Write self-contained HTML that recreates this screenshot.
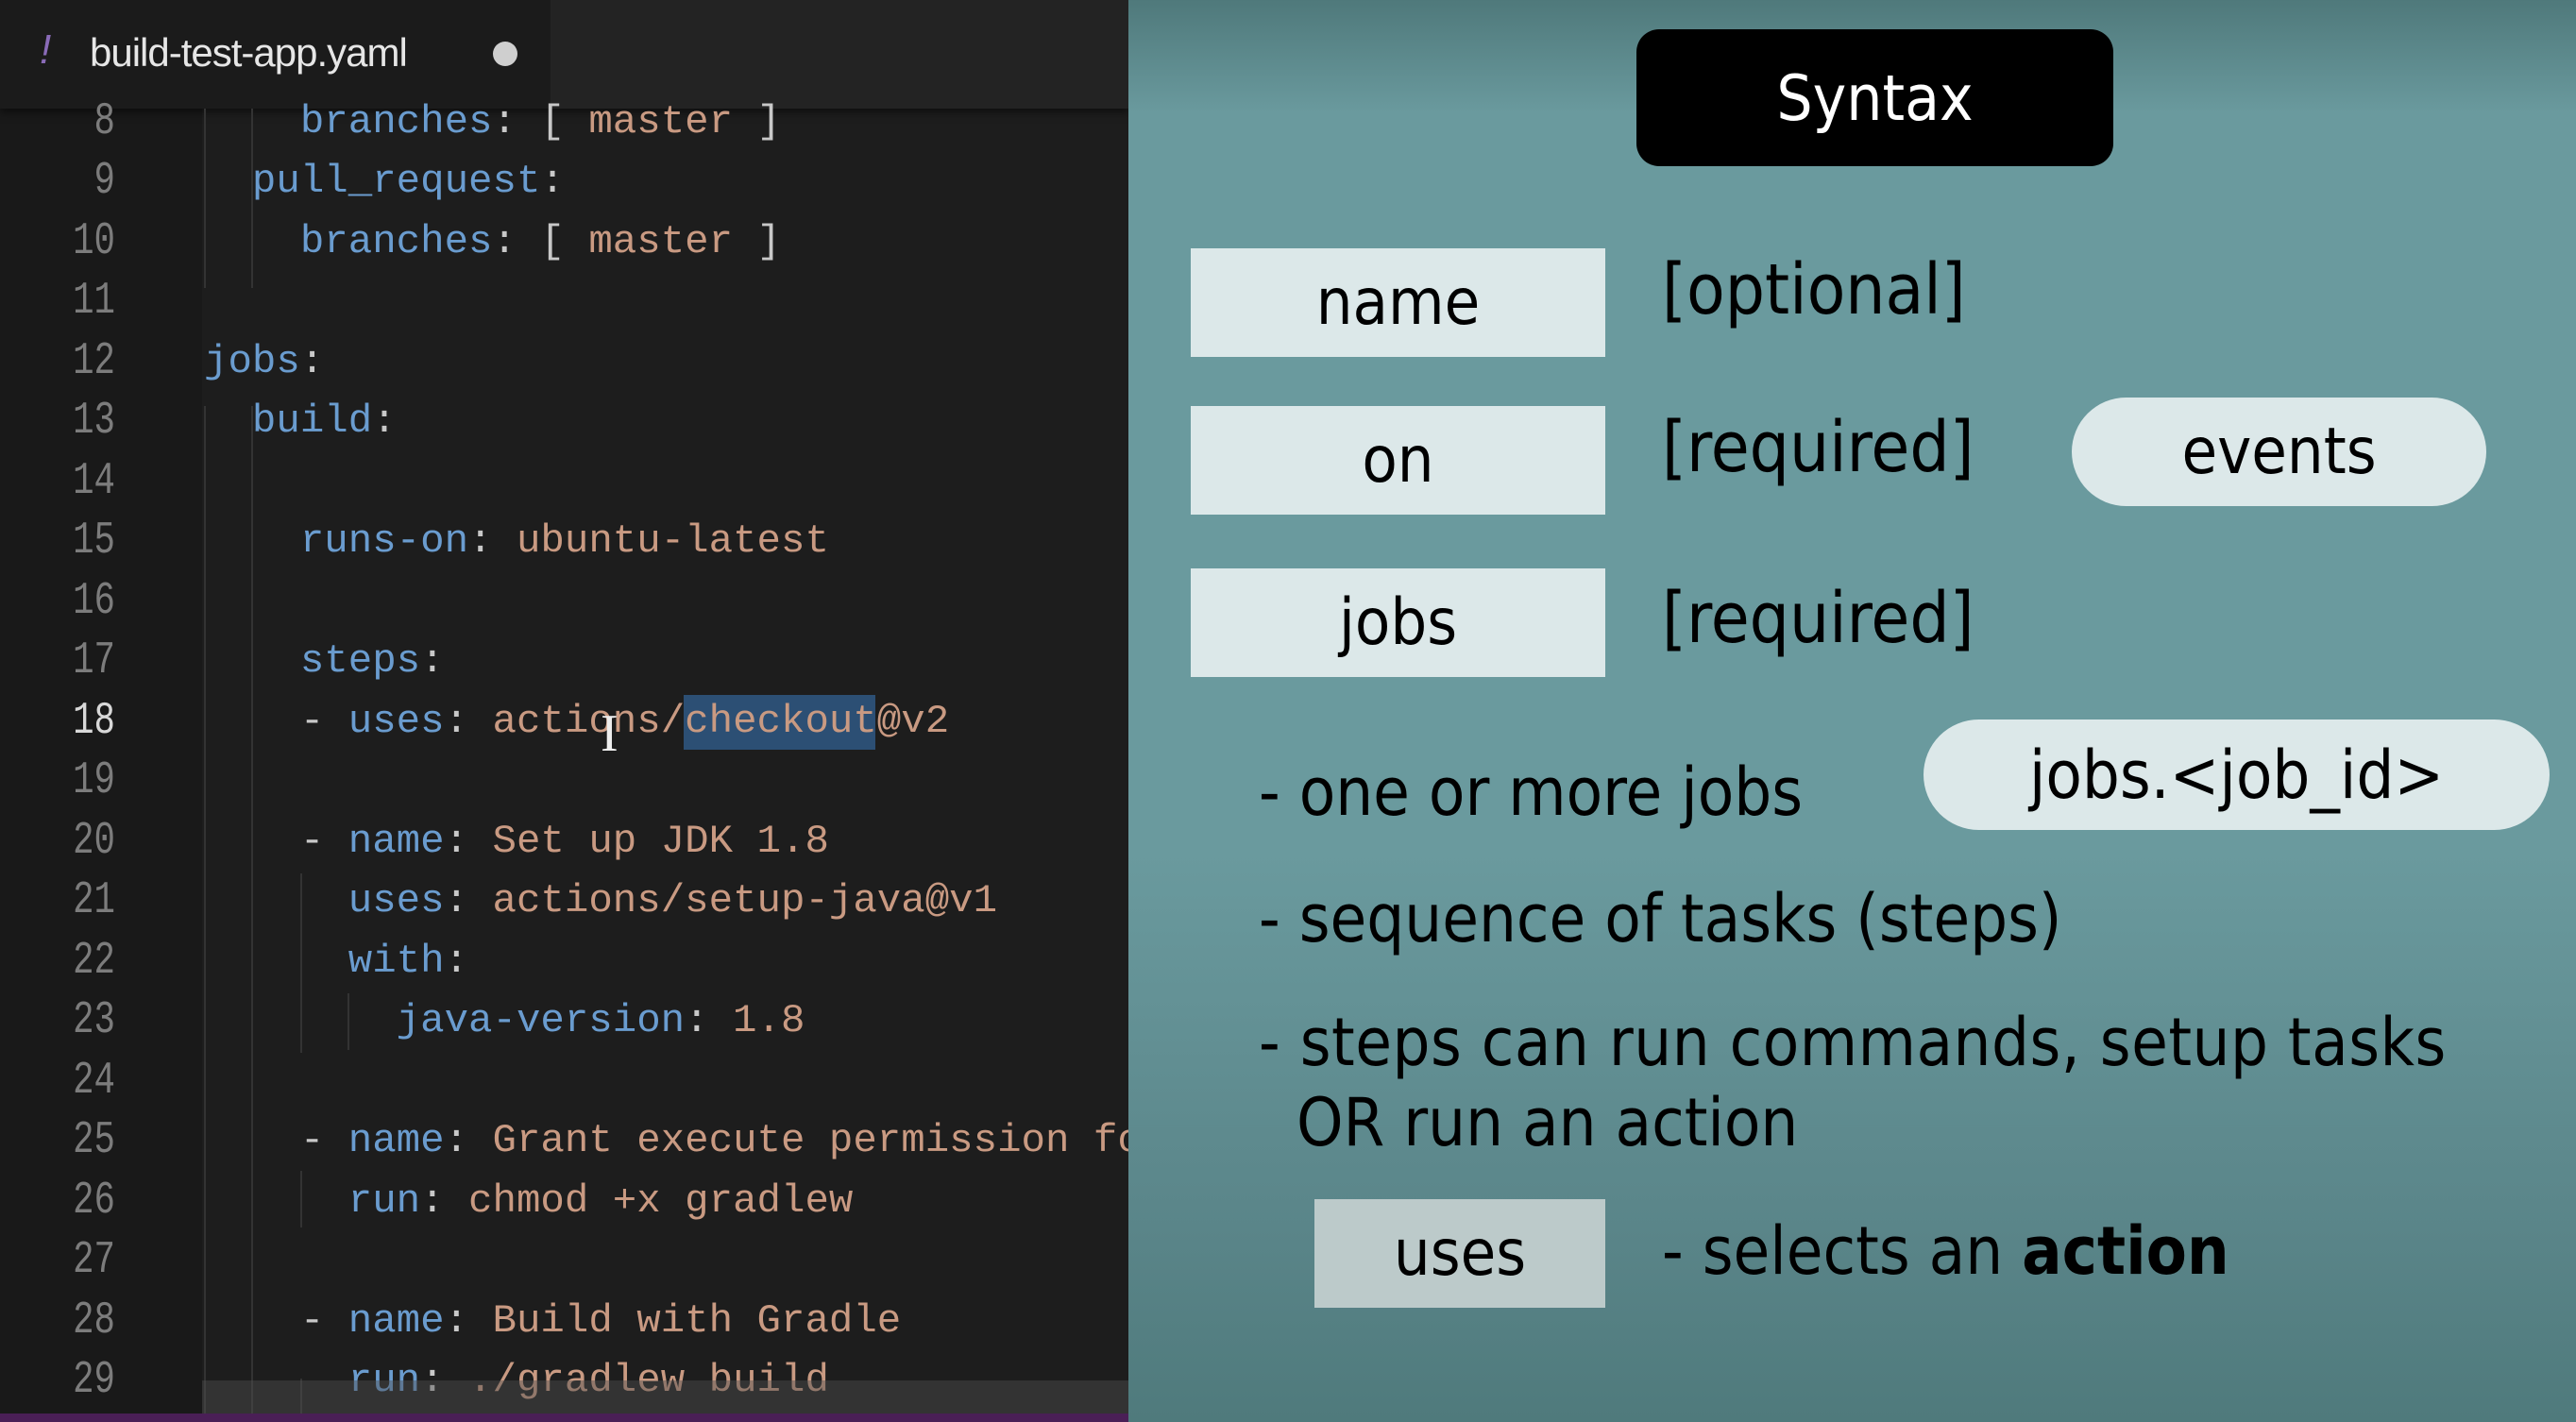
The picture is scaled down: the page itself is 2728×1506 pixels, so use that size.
<!DOCTYPE html>
<html><head><meta charset="utf-8"><style>
*{margin:0;padding:0;box-sizing:border-box}
body{width:2728px;height:1506px;overflow:hidden;position:relative;background:#1c1c1c;font-family:"Liberation Sans",sans-serif}
#ed{position:absolute;left:0;top:0;width:1195px;height:1506px;background:#1d1d1d;overflow:hidden}
#gut{position:absolute;left:0;top:115px;width:214px;height:1391px;background:#191919}
#tabbar{position:absolute;left:0;top:0;width:1195px;height:115px;background:#232323;box-shadow:0 4px 8px rgba(0,0,0,.5)}
#tab{position:absolute;left:0;top:0;width:583px;height:115px;background:#1b1b1b}
.ln{position:absolute;left:0;width:122px;text-align:right;font-family:"Liberation Mono",monospace;font-size:48px;color:#7c7c7c;line-height:63px;transform:scaleX(.78);transform-origin:right}
.code{position:absolute;left:216px;font-family:"Liberation Mono",monospace;font-size:42px;line-height:63px;white-space:pre;color:#c8c8c8;transform:scaleX(1.01);transform-origin:left}
.k{color:#6a9ccf}.v{color:#c99a82}.p{color:#cfcfcf}
.g{position:absolute;width:2px;background:#333}
#right{position:absolute;left:1195px;top:0;width:1533px;height:1506px;background:linear-gradient(#4f797b 0,#6a9a9e 120px,#6a9a9e 900px,#5a8589 1300px,#4f7a7c 1506px)}
.s{font-family:"DejaVu Sans Condensed","DejaVu Sans",sans-serif;font-stretch:condensed;color:#000;position:absolute;white-space:nowrap}
.box{position:absolute;background:#dce8e9;display:flex;align-items:center;justify-content:center;font-family:"DejaVu Sans Condensed","DejaVu Sans",sans-serif;font-stretch:condensed;font-size:68px;color:#000}
</style></head><body>
<div id="ed">
<div id="gut"></div>
<div id="tabbar"><div id="tab">
<span style="position:absolute;left:42px;top:28px;font-size:44px;color:#8a6bb8;font-style:italic">!</span>
<span style="position:absolute;left:95px;top:32px;font-size:42px;color:#e6e6e6;letter-spacing:-1px">build-test-app.yaml</span>
<span style="position:absolute;left:522px;top:44px;width:26px;height:26px;border-radius:50%;background:#cfcfcf"></span>
</div></div>
<div class="g" style="left:216px;top:115px;height:190px"></div>
<div class="g" style="left:266px;top:115px;height:190px"></div>
<div class="g" style="left:216px;top:430px;height:1070px"></div>
<div class="g" style="left:266px;top:430px;height:1070px"></div>
<div class="g" style="left:318px;top:925px;height:190px"></div>
<div class="g" style="left:368px;top:1052px;height:60px"></div>
<div class="g" style="left:318px;top:1240px;height:60px"></div>
<div class="g" style="left:318px;top:1460px;height:40px"></div>

<div class="ln" style="top:98px">8</div>
<div class="ln" style="top:161px">9</div>
<div class="ln" style="top:225px">10</div>
<div class="ln" style="top:288px">11</div>
<div class="ln" style="top:352px">12</div>
<div class="ln" style="top:415px">13</div>
<div class="ln" style="top:479px">14</div>
<div class="ln" style="top:542px">15</div>
<div class="ln" style="top:606px">16</div>
<div class="ln" style="top:669px">17</div>
<div class="ln" style="top:733px;color:#d8d8d8">18</div>
<div class="ln" style="top:796px">19</div>
<div class="ln" style="top:860px">20</div>
<div class="ln" style="top:923px">21</div>
<div class="ln" style="top:987px">22</div>
<div class="ln" style="top:1050px">23</div>
<div class="ln" style="top:1114px">24</div>
<div class="ln" style="top:1177px">25</div>
<div class="ln" style="top:1241px">26</div>
<div class="ln" style="top:1304px">27</div>
<div class="ln" style="top:1368px">28</div>
<div class="ln" style="top:1431px">29</div>

<div class="code" style="top:98px">    <span class="k">branches</span>: [ <span class="v">master</span> ]</div>
<div class="code" style="top:161px">  <span class="k">pull_request</span>:</div>
<div class="code" style="top:225px">    <span class="k">branches</span>: [ <span class="v">master</span> ]</div>
<div class="code" style="top:352px"><span class="k">jobs</span>:</div>
<div class="code" style="top:415px">  <span class="k">build</span>:</div>
<div class="code" style="top:542px">    <span class="k">runs-on</span>: <span class="v">ubuntu-latest</span></div>
<div class="code" style="top:669px">    <span class="k">steps</span>:</div>
<div style="position:absolute;left:724px;top:736px;width:203px;height:58px;background:#2c4f74"></div>
<div class="code" style="top:733px">    - <span class="k">uses</span>: <span class="v">actions/checkout@v2</span></div>
<div style="position:absolute;left:636px;top:745px;font-size:56px;color:#eee;font-family:'Liberation Serif',serif">I</div>
<div class="code" style="top:860px">    - <span class="k">name</span>: <span class="v">Set up JDK 1.8</span></div>
<div class="code" style="top:923px">      <span class="k">uses</span>: <span class="v">actions/setup-java@v1</span></div>
<div class="code" style="top:987px">      <span class="k">with</span>:</div>
<div class="code" style="top:1050px">        <span class="k">java-version</span>: <span class="v">1.8</span></div>
<div class="code" style="top:1177px">    - <span class="k">name</span>: <span class="v">Grant execute permission for gradlew</span></div>
<div class="code" style="top:1241px">      <span class="k">run</span>: <span class="v">chmod +x gradlew</span></div>
<div class="code" style="top:1368px">    - <span class="k">name</span>: <span class="v">Build with Gradle</span></div>
<div class="code" style="top:1431px">      <span class="k">run</span>: <span class="v">./gradlew build</span></div>
<div style="position:absolute;left:214px;top:1462px;width:981px;height:35px;background:rgba(80,80,80,.45)"></div>
<div style="position:absolute;left:0;top:1497px;width:1195px;height:9px;background:#4a1f56"></div>
</div>

<div id="right"></div>
<div style="position:absolute;left:1733px;top:31px;width:505px;height:145px;background:#000;border-radius:24px;display:flex;align-items:center;justify-content:center;color:#fff;font-family:'DejaVu Sans Condensed','DejaVu Sans',sans-serif;font-stretch:condensed;font-size:67px">Syntax</div>

<div class="box" style="left:1261px;top:263px;width:439px;height:115px">name</div>
<div class="box" style="left:1261px;top:430px;width:439px;height:115px">on</div>
<div class="box" style="left:1261px;top:602px;width:439px;height:115px">jobs</div>
<div class="s" style="left:1760px;top:264px;font-size:74px">[optional]</div>
<div class="s" style="left:1760px;top:431px;font-size:74px">[required]</div>
<div class="s" style="left:1760px;top:612px;font-size:74px">[required]</div>
<div class="box" style="left:2194px;top:421px;width:439px;height:115px;border-radius:58px">events</div>
<div class="box" style="left:2037px;top:762px;width:663px;height:117px;border-radius:59px;font-size:70px">jobs.&lt;job_id&gt;</div>
<div class="s" style="left:1333px;top:798px;font-size:70px">- one or more jobs</div>
<div class="s" style="left:1333px;top:932px;font-size:70px">- sequence of tasks (steps)</div>
<div class="s" style="left:1333px;top:1063px;font-size:70px;letter-spacing:.5px">- steps can run commands, setup tasks</div>
<div class="s" style="left:1373px;top:1148px;font-size:70px">OR run an action</div>
<div class="box" style="left:1392px;top:1270px;width:308px;height:115px;background:#bccaca">uses</div>
<div class="s" style="left:1760px;top:1284px;font-size:70px">- selects an <b>action</b></div>
</body></html>
